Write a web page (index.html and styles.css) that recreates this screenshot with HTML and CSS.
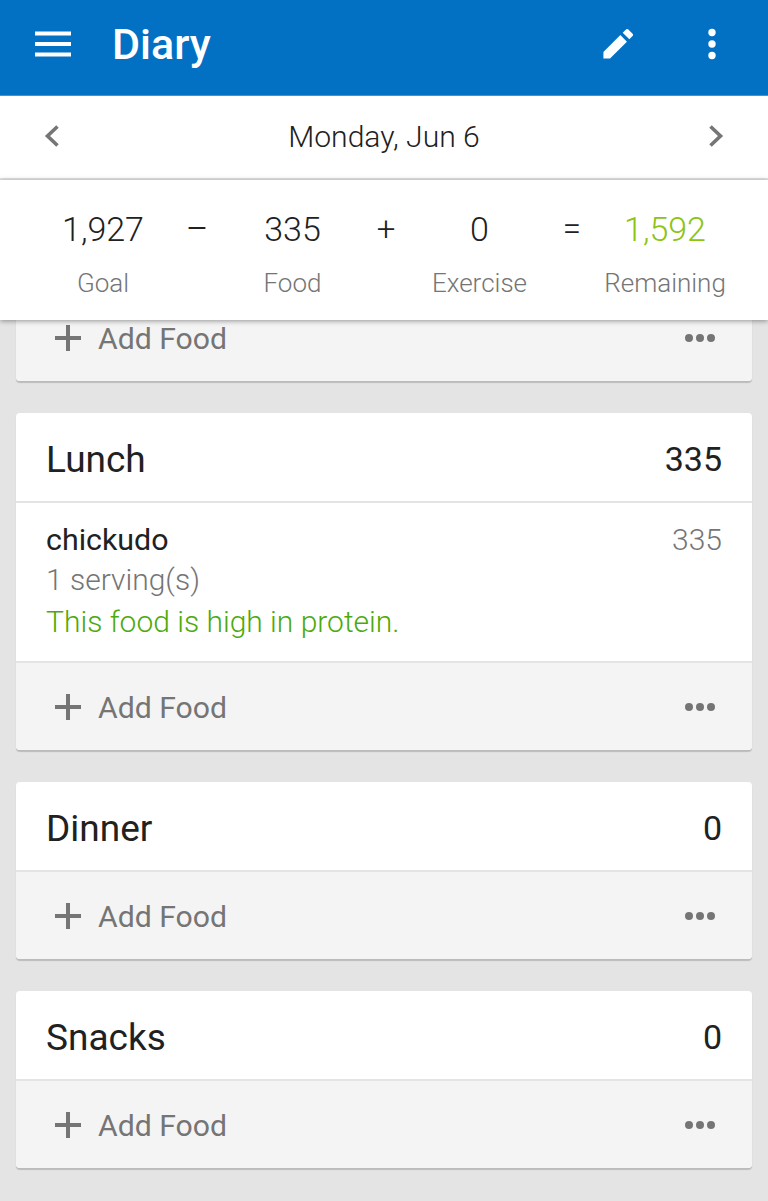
FILE: index.html
```html
<!DOCTYPE html>
<html lang="en">
  <head>
    <meta charset="UTF-8" />
    <meta name="viewport" content="width=device-width, initial-scale=1.0" />
    <title>Diary</title>
    <link rel="stylesheet" href="styles.css">
  </head>
  <body>
    <header class="appbar">
      <svg class="menu-icon" width="36" height="26" viewBox="0 0 36 26"><path d="M0 .5h36v4H0zM0 11h36v4H0zM0 21.500h36v4H0z" fill="#fff"/></svg>
      <h1 class="title">Diary</h1>
      <svg class="edit-icon" width="32" height="32" viewBox="0 0 34 34"><path d="M1.500 25.500V32.500H8.500L26.500 14.500 19.500 7.500zM29 12l3.500-3.500c.7-.7.7-1.800 0-2.500L28 1.500c-.7-.7-1.800-.7-2.500 0L22 5z" fill="#fff"/></svg>
      <svg class="more-icon" width="10" height="32" viewBox="0 0 10 32"><circle cx="5" cy="4.500" r="3.700" fill="#fff"/><circle cx="5" cy="16" r="3.700" fill="#fff"/><circle cx="5" cy="27.500" r="3.700" fill="#fff"/></svg>
    </header>

    <div class="datebar">
      <svg class="chevron" width="16" height="24" viewBox="0 0 16 24"><path d="M13.500 2.500 3.500 12l10 9.500" fill="none" stroke="#757575" stroke-width="3.600"/></svg>
      <span class="date">Monday, Jun 6</span>
      <svg class="chevron" width="16" height="24" viewBox="0 0 16 24"><path d="M2.500 2.500 12.500 12 2.500 21.500" fill="none" stroke="#757575" stroke-width="3.600"/></svg>
    </div>

    <section class="summary">
      <div class="stat"><span class="num">1,927</span><span class="lbl">Goal</span></div>
      <span class="op op-minus">−</span>
      <div class="stat"><span class="num">335</span><span class="lbl">Food</span></div>
      <span class="op">+</span>
      <div class="stat"><span class="num">0</span><span class="lbl">Exercise</span></div>
      <span class="op">=</span>
      <div class="stat"><span class="num green">1,592</span><span class="lbl">Remaining</span></div>
    </section>

    <main class="content">
      <div class="card card-cut">
        <div class="card-foot">
          <svg class="plus" width="28" height="28" viewBox="0 0 28 28"><path d="M12 1h4v26h-4zM1 12h26v4H1z" fill="#757575"/></svg>
          <span class="add">Add Food</span>
          <span class="dots"><i></i><i></i><i></i></span>
        </div>
      </div>

      <div class="card">
        <div class="card-head"><span class="meal">Lunch</span><span class="kcal">335</span></div>
        <div class="entry">
          <div class="entry-top"><span class="food-name">chickudo</span><span class="food-kcal">335</span></div>
          <div class="serving">1 serving(s)</div>
          <div class="note">This food is high in protein.</div>
        </div>
        <div class="card-foot">
          <svg class="plus" width="28" height="28" viewBox="0 0 28 28"><path d="M12 1h4v26h-4zM1 12h26v4H1z" fill="#757575"/></svg>
          <span class="add">Add Food</span>
          <span class="dots"><i></i><i></i><i></i></span>
        </div>
      </div>

      <div class="card">
        <div class="card-head"><span class="meal">Dinner</span><span class="kcal">0</span></div>
        <div class="card-foot">
          <svg class="plus" width="28" height="28" viewBox="0 0 28 28"><path d="M12 1h4v26h-4zM1 12h26v4H1z" fill="#757575"/></svg>
          <span class="add">Add Food</span>
          <span class="dots"><i></i><i></i><i></i></span>
        </div>
      </div>

      <div class="card">
        <div class="card-head"><span class="meal">Snacks</span><span class="kcal">0</span></div>
        <div class="card-foot">
          <svg class="plus" width="28" height="28" viewBox="0 0 28 28"><path d="M12 1h4v26h-4zM1 12h26v4H1z" fill="#757575"/></svg>
          <span class="add">Add Food</span>
          <span class="dots"><i></i><i></i><i></i></span>
        </div>
      </div>
    </main>
  </body>
</html>
```

FILE: styles.css
```css
* {
  box-sizing: border-box;
}
html,
body {
  height: 100%;
}
body {
  font-family: Roboto, Arial, sans-serif;
  margin: 0;
  padding: 0;
  display: flex;
  flex-direction: column;
  overflow: hidden;
  background-color: #e4e4e4;
  color: #212121;
}

/* top bar */
.appbar {
  height: 96px;
  flex: none;
  display: flex;
  align-items: center;
  background-color: #0271c3;
  padding: 0 51px 8px 35px;
  border-bottom: 1px solid #3d94d6;
}
.title {
  margin: 0 0 0 41px;
  flex: 1;
  color: #fff;
  font-size: 43px;
  font-weight: 500;
}
.edit-icon {
  margin-right: 73px;
}

/* date row */
.datebar {
  height: 84px;
  flex: none;
  display: flex;
  align-items: center;
  justify-content: space-between;
  background-color: #fff;
  border-bottom: 2px solid #e4e4e4;
  padding: 0 44px 2px 44px;
}
.date {
  font-size: 30.100px;
  font-weight: 300;
}

/* calorie sum */
.summary {
  height: 140px;
  flex: none;
  display: grid;
  grid-template-columns: 94px 94px 97px 90px 97px 88px 98px;
  justify-items: center;
  align-items: start;
  position: relative;
  z-index: 2;
  background-color: #fff;
  box-shadow: 0 1px 5px rgba(0, 0, 0, 0.4);
  padding: 28px 0 0 56px;
}
.stat {
  display: flex;
  flex-direction: column;
  align-items: center;
}
.num {
  font-size: 34px;
  font-weight: 300;
  line-height: 42px;
}
.green {
  color: #8bc412;
}
.lbl {
  margin-top: 17px;
  font-size: 26px;
  font-weight: 300;
  line-height: 32px;
  color: #757575;
  white-space: nowrap;
}
.op {
  font-size: 33px;
  font-weight: 300;
  line-height: 42px;
}
.op-minus {
  font-size: 41px;
}

/* meals */
.content {
  flex: 1;
  min-height: 0;
  overflow: hidden;
  padding: 0 16px;
}
.card {
  background-color: #fff;
  border-radius: 4px;
  box-shadow: 0 2px 1px rgba(0, 0, 0, 0.18);
  margin-bottom: 32px;
  overflow: hidden;
}
.card-cut {
  margin-top: -26px;
}
.card-head {
  height: 90px;
  display: flex;
  align-items: center;
  justify-content: space-between;
  padding: 3px 30px 0;
  border-bottom: 2px solid #e4e4e4;
}
.meal {
  font-size: 37px;
  margin-top: 2px;
}
.kcal {
  font-size: 34px;
}
.entry {
  height: 160px;
  padding: 17px 30px 0;
  border-bottom: 2px solid #e4e4e4;
}
.entry-top {
  display: flex;
  justify-content: space-between;
  height: 39px;
}
.food-name {
  font-size: 30.400px;
  line-height: 40px;
}
.food-kcal {
  font-size: 30px;
  font-weight: 300;
  line-height: 40px;
  color: #757575;
}
.serving {
  font-size: 30px;
  font-weight: 300;
  line-height: 42px;
  color: #757575;
}
.note {
  font-size: 30px;
  font-weight: 300;
  line-height: 42px;
  color: #4caa0a;
}
.card-foot {
  height: 87px;
  display: flex;
  align-items: center;
  padding: 0 37px 0 38px;
  background-color: #f4f4f4;
}
.add {
  flex: 1;
  margin: 1px 0 0 16px;
  font-size: 30.200px;
  color: #757575;
}
.dots {
  display: flex;
  gap: 3px;
}
.dots i {
  display: block;
  width: 8px;
  height: 8px;
  border-radius: 50%;
  background-color: #757575;
}
```
